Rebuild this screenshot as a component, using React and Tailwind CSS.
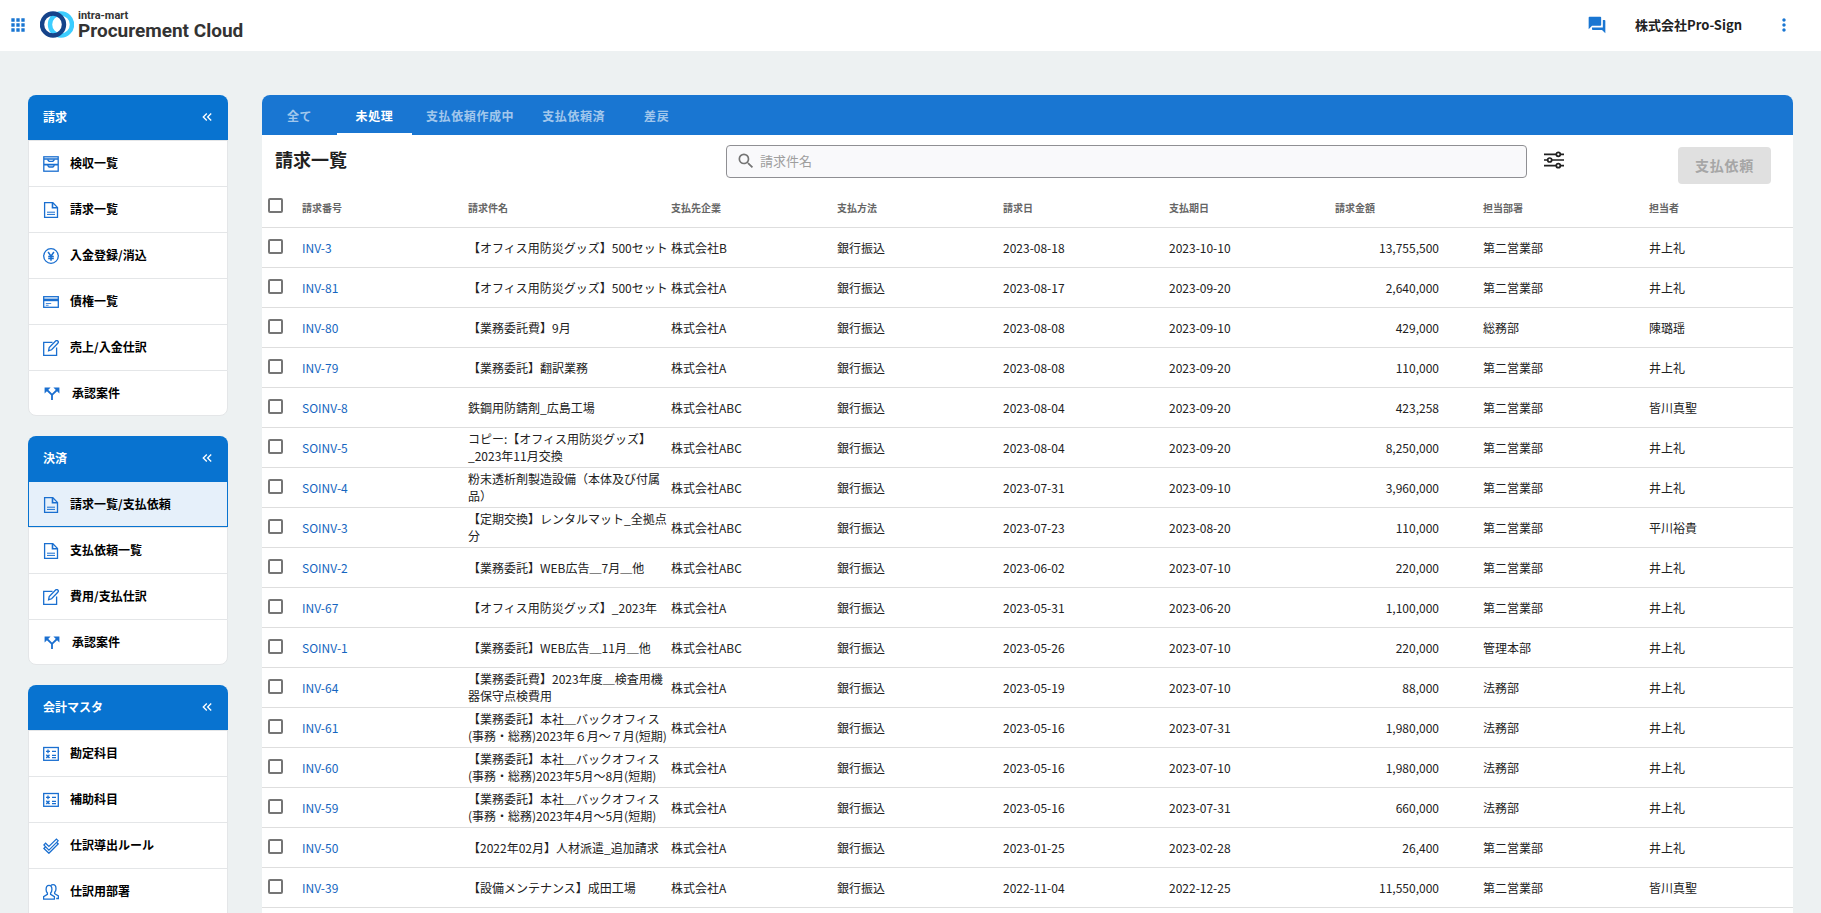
import { MdApps, MdQuestionAnswer, MdMoreVert, MdSearch, MdKeyboardDoubleArrowLeft } from "react-icons/md";

const svgProps = {
  viewBox: "0 0 16 16",
  fill: "none",
  stroke: "currentColor",
  strokeWidth: 1.3,
  className: "h-4 w-4 shrink-0",
  "aria-hidden": true,
};

const icons = {
  drawer: (
    <svg {...svgProps}>
      <rect x="0.8" y="0.8" width="14.4" height="14.4" />
      <path d="M1 3h14M1 8.7h14" strokeWidth="1.7" />
      <path d="M4.500 3.500l1.600 1.800h3.800l1.600-1.800M4.500 9.200l1.600 1.800h3.800l1.600-1.800" />
    </svg>
  ),
  file: (
    <svg {...svgProps}>
      <path d="M1.600.7h8.200l4.700 4.700v9.900H1.600z" />
      <path d="M9.500.7v5h5" strokeWidth="1.6" />
      <path d="M4 10.200h8M4 12.400h8" strokeWidth="1" />
    </svg>
  ),
  yen: (
    <svg {...svgProps}>
      <circle cx="8" cy="8" r="7.300" />
      <path d="M5.100 4L8 8.200 10.900 4M8 8.200v4.600M5.200 8.400h5.600M5.200 10.500h5.600" strokeWidth="1.5" />
    </svg>
  ),
  card: (
    <svg {...svgProps}>
      <rect x="0.7" y="2.700" width="14.600" height="10.600" />
      <path d="M.7 5.900h14.600" strokeWidth="2.600" />
      <path d="M2.800 9.500h5.400M2.800 11.300h2.800" strokeWidth="0.8" />
    </svg>
  ),
  pencil: (
    <svg {...svgProps}>
      <path d="M9.500 2.400H.7v12.900h12.900V7.400" />
      <path d="M5.600 10.700l.6-3.200L12.600 1a1.400 1.400 0 0 1 2.200 2.200L8.600 9.800z" />
    </svg>
  ),
  calc: (
    <svg {...svgProps}>
      <rect x="0.7" y="1.500" width="14.600" height="12.800" />
      <path d="M3 5.400h4M5 3.600v3.600M9 5.400h4" strokeWidth="1.300" />
      <path d="M3.300 8.800l3.200 3.200M6.500 8.800L3.300 12" strokeWidth="1.500" />
      <path d="M9 9.300h4M9 11.600h4" strokeWidth="1.200" />
    </svg>
  ),
  checks: (
    <svg {...svgProps}>
      <path d="M.9 7l1.700-1.800 3.300 3.200L13.400 1l1.800 1.800-9.300 9.300z" strokeWidth="1.200" />
      <path d="M2.600 8.800L.9 10.500l5 4.700 9.300-9.300-1.700-1.600" strokeWidth="1.400" />
    </svg>
  ),
  people: (
    <svg {...svgProps}>
      <path d="M.6 15.200v-2.600l3.800-2.200V9c-.9-.8-1.300-2-1.300-3.600 0-2.500 1-4 2.900-4s2.900 1.500 2.900 4c0 1.600-.4 2.800-1.300 3.600v1.400l3.800 2.200v2.600z" />
      <path d="M7.800 1.700C8.300 1.100 9.100.7 10 .7c2 0 3 1.500 3 4 0 1.600-.5 2.800-1.300 3.600v1.400l3.700 2.200v2.600h-2.200" />
    </svg>
  ),
  split: (
    <svg viewBox="0 0 18 16" className="h-4 w-[18px] shrink-0" fill="none" stroke="currentColor" strokeWidth="1.800" aria-hidden="true">
      <path d="M9 14V8.800L4 4M9 8.800L14 4" />
      <path d="M1.600 1.500h6L1.600 7.500zM16.400 1.500h-6l6 6z" fill="currentColor" stroke="none" />
    </svg>
  ),
};

const menus = [
  {
    title: "請求",
    items: [
      ["drawer", "検収一覧"],
      ["file", "請求一覧"],
      ["yen", "入金登録/消込"],
      ["card", "債権一覧"],
      ["pencil", "売上/入金仕訳"],
      ["split", "承認案件"],
    ],
  },
  {
    title: "決済",
    active: 0,
    items: [
      ["file", "請求一覧/支払依頼"],
      ["file", "支払依頼一覧"],
      ["pencil", "費用/支払仕訳"],
      ["split", "承認案件"],
    ],
  },
  {
    title: "会計マスタ",
    continues: true,
    items: [
      ["calc", "勘定科目"],
      ["calc", "補助科目"],
      ["checks", "仕訳導出ルール"],
      ["people", "仕訳用部署"],
    ],
  },
];

const tabs = ["全て", "未処理", "支払依頼作成中", "支払依頼済", "差戻"];

const rows = [
  ["INV-3", ["【オフィス用防災グッズ】500セット"], "株式会社B", "2023-08-18", "2023-10-10", "13,755,500", "第二営業部", "井上礼"],
  ["INV-81", ["【オフィス用防災グッズ】500セット"], "株式会社A", "2023-08-17", "2023-09-20", "2,640,000", "第二営業部", "井上礼"],
  ["INV-80", ["【業務委託費】9月"], "株式会社A", "2023-08-08", "2023-09-10", "429,000", "総務部", "陳璐瑶"],
  ["INV-79", ["【業務委託】翻訳業務"], "株式会社A", "2023-08-08", "2023-09-20", "110,000", "第二営業部", "井上礼"],
  ["SOINV-8", ["鉄鋼用防錆剤_広島工場"], "株式会社ABC", "2023-08-04", "2023-09-20", "423,258", "第二営業部", "皆川真聖"],
  ["SOINV-5", ["コピー:【オフィス用防災グッズ】", "_2023年11月交換"], "株式会社ABC", "2023-08-04", "2023-09-20", "8,250,000", "第二営業部", "井上礼"],
  ["SOINV-4", ["粉末透析剤製造設備（本体及び付属", "品）"], "株式会社ABC", "2023-07-31", "2023-09-10", "3,960,000", "第二営業部", "井上礼"],
  ["SOINV-3", ["【定期交換】レンタルマット_全拠点", "分"], "株式会社ABC", "2023-07-23", "2023-08-20", "110,000", "第二営業部", "平川裕貴"],
  ["SOINV-2", ["【業務委託】WEB広告＿7月＿他"], "株式会社ABC", "2023-06-02", "2023-07-10", "220,000", "第二営業部", "井上礼"],
  ["INV-67", ["【オフィス用防災グッズ】_2023年"], "株式会社A", "2023-05-31", "2023-06-20", "1,100,000", "第二営業部", "井上礼"],
  ["SOINV-1", ["【業務委託】WEB広告＿11月＿他"], "株式会社ABC", "2023-05-26", "2023-07-10", "220,000", "管理本部", "井上礼"],
  ["INV-64", ["【業務委託費】2023年度＿検査用機", "器保守点検費用"], "株式会社A", "2023-05-19", "2023-07-10", "88,000", "法務部", "井上礼"],
  ["INV-61", ["【業務委託】本社＿バックオフィス", "(事務・総務)2023年６月～７月(短期)"], "株式会社A", "2023-05-16", "2023-07-31", "1,980,000", "法務部", "井上礼"],
  ["INV-60", ["【業務委託】本社＿バックオフィス", "(事務・総務)2023年5月～8月(短期)"], "株式会社A", "2023-05-16", "2023-07-10", "1,980,000", "法務部", "井上礼"],
  ["INV-59", ["【業務委託】本社＿バックオフィス", "(事務・総務)2023年4月～5月(短期)"], "株式会社A", "2023-05-16", "2023-07-31", "660,000", "法務部", "井上礼"],
  ["INV-50", ["【2022年02月】人材派遣_追加請求"], "株式会社A", "2023-01-25", "2023-02-28", "26,400", "第二営業部", "井上礼"],
  ["INV-39", ["【設備メンテナンス】成田工場"], "株式会社A", "2022-11-04", "2022-12-25", "11,550,000", "第二営業部", "皆川真聖"],
];

function Checkbox({ label }) {
  return (
    <input
      type="checkbox"
      aria-label={label}
      className="ml-[6px] block h-[15px] w-[15px] appearance-none rounded-xs border-2 border-[#757575] bg-white checked:bg-[#1976d2]"
    />
  );
}

function Header() {
  return (
    <header className="flex h-[51px] shrink-0 items-center bg-white pr-[27px] pb-0.5 pl-2">
      <button type="button" aria-label="アプリ一覧" className="text-[#1976d2]">
        <MdApps className="h-5 w-5" />
      </button>
      <a href="#" className="ml-3 flex items-center gap-1 text-[#333333]">
        <svg viewBox="0 0 34 27" className="h-[27px] w-[34px]" fill="none" strokeWidth="4.400" aria-hidden="true">
          <circle cx="21" cy="13.500" r="11" stroke="#3ccdff" />
          <circle cx="13" cy="13.500" r="11" stroke="#15438a" />
        </svg>
        <span className="flex flex-col font-[Roboto,sans-serif] font-bold">
          <span className="text-[11px] leading-3">intra-mart</span>
          <span className="text-[19px] leading-[18px]">Procurement Cloud</span>
        </span>
      </a>
      <div className="ml-auto flex items-center">
        <button type="button" aria-label="チャット" className="text-[#1976d2]">
          <MdQuestionAnswer className="h-5 w-5" />
        </button>
        <span className="ml-7 text-[13px] font-bold">株式会社Pro-Sign</span>
        <button type="button" aria-label="メニュー" className="ml-8 text-[#1976d2]">
          <MdMoreVert className="h-5 w-5" />
        </button>
      </div>
    </header>
  );
}

function MenuCard({ title, items, active, continues }) {
  return (
    <section className="shrink-0">
      <h2 className="flex h-[45px] items-center justify-between rounded-t-lg bg-[#0873d0] pr-[13px] pb-px pl-[15px] text-[12px] font-bold text-white">
        {title}
        <button type="button" aria-label={title + "を閉じる"}>
          <MdKeyboardDoubleArrowLeft className="h-4 w-4" />
        </button>
      </h2>
      <ul>
        {items.map(([icon, label], i) => (
          <li key={i}>
            <a
              href="#"
              className={
                "flex h-[46px] items-center border-x border-t pb-px pl-[14px] text-[12px] font-bold text-black " +
                (i === active ? "border-b border-[#0873d0] bg-[#e6f0fa] " : "border-[#e4e6e8] bg-white ") +
                (i === items.length - 1 && !continues ? "rounded-b-lg border-b" : "")
              }
            >
              <span className="flex pt-0.5 text-[#1a6fd0]">{icons[icon]}</span>
              <span className="ml-[11px]">{label}</span>
            </a>
          </li>
        ))}
      </ul>
    </section>
  );
}

export default function App() {
  return (
    <div className="flex h-screen flex-col overflow-hidden bg-[#edf1f2] font-['Noto_Sans_CJK_JP',sans-serif] text-[#212121]">
      <Header />
      <div className="flex min-h-0 flex-1 gap-[34px] overflow-hidden px-7 pt-11">
        <nav className="flex w-[200px] shrink-0 flex-col gap-5">
          {menus.map((m) => (
            <MenuCard key={m.title} {...m} />
          ))}
        </nav>
        <main className="min-w-0 flex-1 overflow-hidden rounded-t-lg bg-white">
          <div role="tablist" className="flex h-10 bg-[#1976d2]">
            {tabs.map((t, i) => (
              <button
                key={t}
                type="button"
                role="tab"
                aria-selected={i === 1}
                className={
                  "min-w-[75px] border-b-2 px-[14px] pt-1 text-[12px] font-bold tracking-wider " +
                  (i === 1 ? "border-b-white text-white" : "border-b-transparent text-white/60")
                }
              >
                {t}
              </button>
            ))}
          </div>
          <div className="flex h-[52px] items-start pt-[10px]">
            <h1 className="w-[464px] shrink-0 pl-[13px] text-[18px] leading-7 font-bold">請求一覧</h1>
            <label className="flex h-[33px] min-w-0 flex-1 items-center gap-1 rounded border border-[#8f8f93] bg-[#f9f9fb] pb-0.5 pl-[9px]">
              <MdSearch className="h-5 w-5 shrink-0 text-[#757575]" aria-hidden="true" />
              <input
                type="text"
                aria-label="請求件名"
                placeholder="請求件名"
                className="min-w-0 flex-1 bg-transparent text-[13px] outline-none placeholder:text-[#9e9e9e]"
              />
            </label>
            <div className="flex w-[266px] shrink-0 items-start justify-between pr-[22px] pl-[17px]">
              <button type="button" aria-label="絞り込み" className="mt-[5px]">
                <svg viewBox="0 0 20 20" className="h-5 w-5" fill="none" stroke="#212121" strokeWidth="1.700" aria-hidden="true">
                  <path d="M0 4.300h12M16.500 4.300H20M0 10h3.500M8 10h12M0 15.700h12M16.500 15.700H20" />
                  <circle cx="14.300" cy="4.300" r="2" />
                  <circle cx="5.700" cy="10" r="2" />
                  <circle cx="14.300" cy="15.700" r="2" />
                </svg>
              </button>
              <button
                type="button"
                disabled
                className="mt-0.5 h-[37px] w-[93px] rounded bg-[#e0e0e0] text-[14px] font-bold tracking-wider text-[#a6a6a6]"
              >
                支払依頼
              </button>
            </div>
          </div>
          <table className="w-full table-fixed border-collapse text-left text-[12px] leading-[17px] whitespace-nowrap">
            <colgroup>
              <col className="w-10" />
              <col />
              <col className="w-[203px]" />
              <col />
              <col />
              <col />
              <col />
              <col className="w-[148px]" />
              <col />
              <col className="w-36" />
            </colgroup>
            <thead>
              <tr className="h-10 border-b border-[#dedede] text-[10px] text-[#666666]">
                <th className="pb-0.5">
                  <Checkbox label="すべて選択" />
                </th>
                {["請求番号", "請求件名", "支払先企業", "支払方法", "請求日", "支払期日", "請求金額", "担当部署", "担当者"].map((h) => (
                  <th key={h} className="pt-0.5 font-bold">
                    {h}
                  </th>
                ))}
              </tr>
            </thead>
            <tbody>
              {rows.map(([no, name, company, issued, due, amount, dept, person]) => (
                <tr key={no} className="h-10 border-b border-[#dedede]">
                  <td className="pb-0.5">
                    <Checkbox label={no} />
                  </td>
                  <td>
                    <a href="#" className="text-[#1565c0]">
                      {no}
                    </a>
                  </td>
                  <td>
                    {name.map((line) => (
                      <span key={line} className="block">
                        {line}
                      </span>
                    ))}
                  </td>
                  <td>{company}</td>
                  <td>銀行振込</td>
                  <td>{issued}</td>
                  <td>{due}</td>
                  <td className="pr-11 text-right">{amount}</td>
                  <td>{dept}</td>
                  <td>{person}</td>
                </tr>
              ))}
            </tbody>
          </table>
        </main>
      </div>
    </div>
  );
}
